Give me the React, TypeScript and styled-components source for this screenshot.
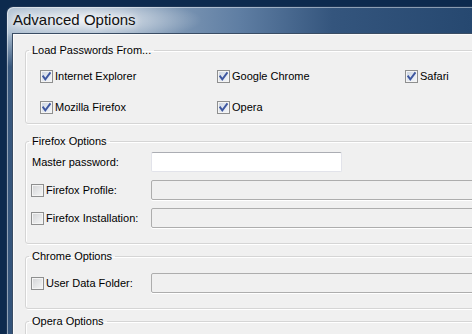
import React from 'react';
import styled, { createGlobalStyle } from 'styled-components';

const GlobalStyle = createGlobalStyle`
  html, body {
    margin: 0;
    width: 472px;
    height: 334px;
    overflow: hidden;
    background: #0d2a4e;
  }
  body {
    font-family: "Liberation Sans", Arial, sans-serif;
    font-size: 11px;
    color: #000;
  }
`;

const Window = styled.div`
  margin: 6px 0 0 6px;
  width: 466px;
  height: 328px;
  overflow: hidden;
  box-sizing: border-box;
  border: 1px solid #1c3454;
  border-right: none;
  border-bottom: none;
  border-top-left-radius: 7px;
  padding-left: 5px;
  display: flex;
  flex-direction: column;
  background:
    radial-gradient(ellipse 115px 22px at 80px 13px, rgba(255, 255, 255, 0.8), rgba(255, 255, 255, 0) 100%),
    linear-gradient(180deg, rgba(0, 0, 0, 0) 0, rgba(0, 0, 0, 0) 26px, rgba(45, 78, 118, 0.9) 60px, rgba(45, 78, 118, 0.95) 100%),
    linear-gradient(90deg, #a9bccf 0%, #93a9c1 25%, #5f7ea3 50%, #34557d 70%, #264870 100%);
  box-shadow: inset 1px 1px 0 rgba(255, 255, 255, 0.45);
`;

const TitleBar = styled.div`
  height: 26px;
  flex: none;
  line-height: 26px;
  padding-left: 1px;
  font-size: 15px;
  color: #101010;
  text-shadow: 0 0 6px #fff, 0 0 10px rgba(255, 255, 255, 0.9);
  white-space: nowrap;
`;

const Content = styled.div`
  flex: 1;
  overflow: hidden;
  background: #f0f0f0;
  border: 1px solid #3a4d64;
  border-right: none;
  border-bottom: none;
  box-shadow: inset 1px 1px 0 #fbfbfb;
  padding: 0 0 0 12px;
`;

const Group = styled.fieldset<{ $top: number }>`
  margin: ${({ $top }) => $top}px -30px 0 0;
  padding: 0;
  min-inline-size: 0;
  border: 1px solid #d5d5d5;
  border-radius: 3px;
  box-shadow: 1px 1px 0 #fff, inset 1px 1px 0 #fff;
`;

const Legend = styled.legend`
  margin-left: 3px;
  padding: 0 3px;
  line-height: 13px;
  font-size: 11px;
`;

const BrowserGrid = styled.div`
  display: grid;
  grid-template-columns: 177px 188px 1fr;
  grid-auto-rows: 13px;
  row-gap: 18px;
  padding: 13px 0 9px 14px;
`;

const OptionRows = styled.div<{ $top: number }>`
  display: grid;
  grid-template-columns: 120px 1fr;
  grid-auto-rows: 20px;
  row-gap: 8px;
  padding: ${({ $top }) => $top}px 0 15px 5px;
  align-items: center;
`;

const CheckLabel = styled.label`
  display: flex;
  align-items: center;
  gap: 2px;
  line-height: 13px;
  white-space: nowrap;
`;

const PlainLabel = styled.span`
  padding-left: 1px;
  white-space: nowrap;
`;

const Box = styled.span<{ $checked: boolean }>`
  width: 13px;
  height: 13px;
  box-sizing: border-box;
  border: 1px solid #8e8f8f;
  flex: none;
  display: flex;
  align-items: center;
  justify-content: center;
  background: ${({ $checked }) =>
    $checked
      ? 'linear-gradient(135deg, #c9d2df 0%, #e6ebf2 60%, #f4f6f9 100%)'
      : 'linear-gradient(135deg, #d2d3d5 0%, #e8e9ea 60%, #f6f6f6 100%)'};
  box-shadow: inset 0 0 0 1px #f4f4f4;
`;

const Field = styled.div<{ $disabled?: boolean; $width?: number }>`
  height: 20px;
  box-sizing: border-box;
  width: ${({ $width }) => ($width ? `${$width}px` : 'auto')};
  margin-right: ${({ $width }) => ($width ? '0' : '10px')};
  border-radius: 2px;
  border: 1px solid ${({ $disabled }) => ($disabled ? '#adadad' : '#e2e3ea')};
  border-top-color: ${({ $disabled }) => ($disabled ? '#adadad' : '#abadb3')};
  background: ${({ $disabled }) => ($disabled ? '#f0f0f0' : '#fff')};
  box-shadow: ${({ $disabled }) => ($disabled ? '0 1px 0 #fff' : 'none')};
`;

const Check: React.FC<{ checked: boolean; label: string }> = ({ checked, label }) => (
  <CheckLabel>
    <Box $checked={checked}>
      {checked && (
        <svg width="11" height="11" viewBox="0 0 11 11">
          <path d="M2.2 5.4 L4.3 8.3 L8.9 2.2" fill="none" stroke="#3e57a0" strokeWidth="1.9" strokeLinecap="square" />
        </svg>
      )}
    </Box>
    {label}
  </CheckLabel>
);

const browsers = [
  { name: 'Internet Explorer', on: true },
  { name: 'Google Chrome', on: true },
  { name: 'Safari', on: true },
  { name: 'Mozilla Firefox', on: true },
  { name: 'Opera', on: true },
];

const App: React.FC = () => (
  <>
    <GlobalStyle />
    <Window>
      <TitleBar>Advanced Options</TitleBar>
      <Content>
        <Group $top={10}>
          <Legend>Load Passwords From...</Legend>
          <BrowserGrid>
            {browsers.map((b) => (
              <Check key={b.name} checked={b.on} label={b.name} />
            ))}
          </BrowserGrid>
        </Group>

        <Group $top={11}>
          <Legend>Firefox Options</Legend>
          <OptionRows $top={4}>
            <PlainLabel>Master password:</PlainLabel>
            <Field $width={191} />
            <Check checked={false} label="Firefox Profile:" />
            <Field $disabled />
            <Check checked={false} label="Firefox Installation:" />
            <Field $disabled />
          </OptionRows>
        </Group>

        <Group $top={6}>
          <Legend>Chrome Options</Legend>
          <OptionRows $top={10}>
            <Check checked={false} label="User Data Folder:" />
            <Field $disabled />
          </OptionRows>
        </Group>

        <Group $top={6}>
          <Legend>Opera Options</Legend>
          <OptionRows $top={10} />
        </Group>
      </Content>
    </Window>
  </>
);

export default App;
